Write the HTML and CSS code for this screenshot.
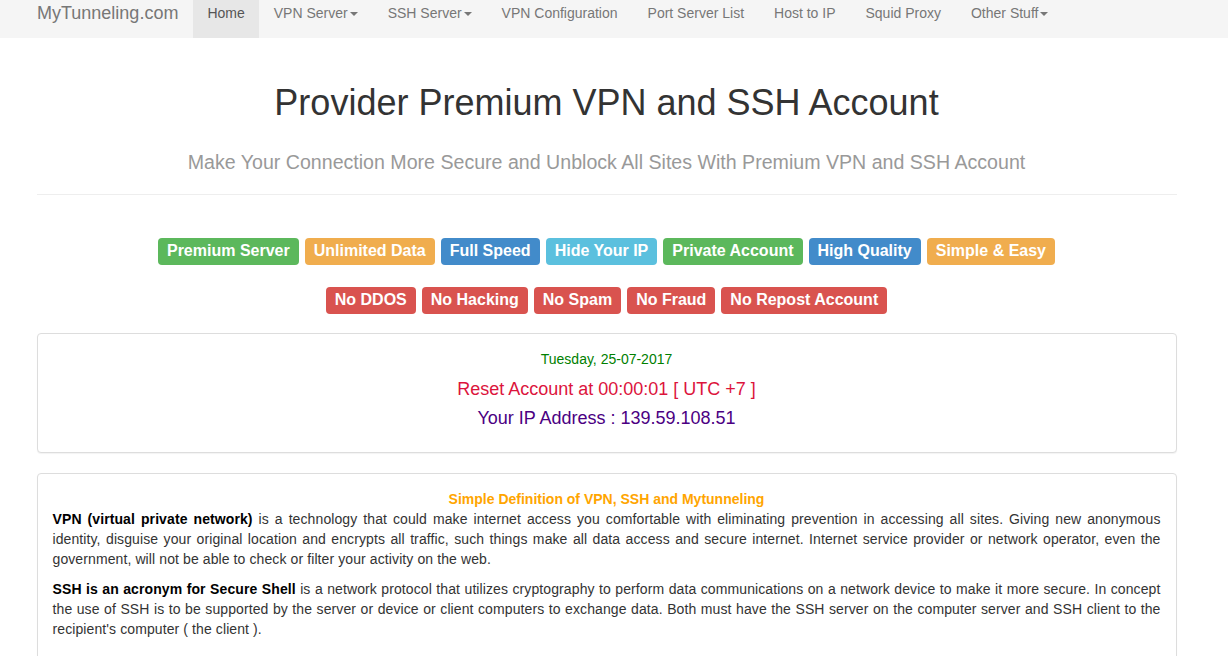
FILE: index.html
```html
<!DOCTYPE html>
<html lang="en">
<head>
<meta charset="utf-8">
<title>MyTunneling.com</title>
<link rel="stylesheet" href="styles.css">
</head>
<body>
<nav class="navbar">
  <a class="brand" href="#">MyTunneling.com</a>
  <ul class="nav">
    <li class="active"><a href="#">Home</a></li>
    <li><a href="#">VPN Server<span class="caret"></span></a></li>
    <li><a href="#">SSH Server<span class="caret"></span></a></li>
    <li><a href="#">VPN Configuration</a></li>
    <li><a href="#">Port Server List</a></li>
    <li><a href="#">Host to IP</a></li>
    <li><a href="#">Squid Proxy</a></li>
    <li><a href="#">Other Stuff<span class="caret"></span></a></li>
  </ul>
</nav>
<div class="page">
  <div class="container">
    <header class="page-header">
      <h1 class="title">Provider Premium VPN and SSH Account</h1>
      <p class="subtitle">Make Your Connection More Secure and Unblock All Sites With Premium VPN and SSH Account</p>
    </header>
    <div class="labels labels-top">
      <span class="label success">Premium Server</span>
      <span class="label warning">Unlimited Data</span>
      <span class="label primary">Full Speed</span>
      <span class="label info">Hide Your IP</span>
      <span class="label success">Private Account</span>
      <span class="label primary">High Quality</span>
      <span class="label warning">Simple &amp; Easy</span>
    </div>
    <div class="labels labels-bottom">
      <span class="label danger">No DDOS</span>
      <span class="label danger">No Hacking</span>
      <span class="label danger">No Spam</span>
      <span class="label danger">No Fraud</span>
      <span class="label danger">No Repost Account</span>
    </div>
    <div class="panel">
      <div class="panel-body info-body">
        <div class="date">Tuesday, 25-07-2017</div>
        <div class="reset">Reset Account at 00:00:01 [ UTC +7 ]</div>
        <div class="ip">Your IP Address : 139.59.108.51</div>
      </div>
    </div>
    <div class="panel">
      <div class="panel-body">
        <div class="def-title">Simple Definition of VPN, SSH and Mytunneling</div>
        <p class="def"><b>VPN (virtual private network)</b> is a technology that could make internet access you comfortable with eliminating prevention in accessing all sites. Giving new anonymous identity, disguise your original location and encrypts all traffic, such things make all data access and secure internet. Internet service provider or network operator, even the government, will not be able to check or filter your activity on the web.</p>
        <p class="def"><b>SSH is an acronym for Secure Shell</b> is a network protocol that utilizes cryptography to perform data communications on a network device to make it more secure. In concept the use of SSH is to be supported by the server or device or client computers to exchange data. Both must have the SSH server on the computer server and SSH client to the recipient's computer ( the client ).</p>
      </div>
    </div>
  </div>
</div>
</body>
</html>
```

FILE: styles.css
```css
html, body {
  margin: 0;
  padding: 0;
}
body {
  font-family: "Liberation Sans", Arial, sans-serif;
  font-size: 14px;
  line-height: 20px;
  color: #333;
  background: #fff;
  padding-right: 15px;
  overflow: hidden;
}
a { text-decoration: none; }

.navbar {
  display: flex;
  align-items: flex-start;
  height: 38px;
  background: #f5f5f5;
  padding-left: 22px;
  margin-right: -15px;
  overflow: hidden;
}
.brand {
  display: block;
  padding: 3px 15px 15px;
  font-size: 18px;
  line-height: 20px;
  color: #777;
}
.nav {
  display: flex;
  list-style: none;
  margin: 0;
  padding: 0;
}
.nav a {
  display: block;
  padding: 3px 15px 15px;
  line-height: 20px;
  color: #777;
}
.nav .active a {
  background: #e7e7e7;
  color: #555;
  padding-left: 14px;
  padding-right: 14px;
}
.caret {
  display: inline-block;
  width: 0;
  height: 0;
  margin-left: 2px;
  vertical-align: middle;
  border-top: 4px solid #777;
  border-left: 4px solid transparent;
  border-right: 4px solid transparent;
}

.container {
  width: 1140px;
  margin: 0 auto;
}

.page-header {
  text-align: center;
  border-bottom: 1px solid #eee;
  padding-bottom: 21px;
}
.title {
  margin: 45px 0 0;
  font-size: 36px;
  font-weight: 400;
  line-height: 40px;
  color: #333;
}
.subtitle {
  margin: 28px 0 0;
  font-size: 19.6px;
  line-height: 22px;
  color: #999;
}

.labels {
  display: flex;
  justify-content: center;
  gap: 6px;
}
.labels-top { margin-top: 43px; }
.labels-bottom { margin-top: 22px; }
.label {
  display: inline-block;
  padding: 5px 9px 6px;
  font-size: 16px;
  font-weight: 700;
  line-height: 16px;
  color: #fff;
  border-radius: 4px;
  white-space: nowrap;
}
.success { background: #5cb85c; }
.warning { background: #f0ad4e; }
.primary { background: #428bca; }
.info { background: #5bc0de; }
.danger { background: #d9534f; }

.panel {
  border: 1px solid #ddd;
  border-radius: 4px;
  box-shadow: 0 1px 1px rgba(0,0,0,.05);
  margin-bottom: 20px;
  background: #fff;
}
.labels-bottom + .panel { margin-top: 19px; }
.panel-body {
  padding: 15px;
}
.info-body {
  text-align: center;
  padding-bottom: 24px;
}
.date {
  color: #008000;
}
.reset {
  margin-top: 10px;
  font-size: 18px;
  color: #dc143c;
}
.ip {
  margin-top: 9px;
  font-size: 18px;
  color: #4b0082;
}
.def-title {
  text-align: center;
  font-weight: 700;
  color: #ffa500;
}
.def {
  margin: 0 0 10px;
  text-align: justify;
  letter-spacing: 0.1px;
}
.def b { color: #000; }
```
